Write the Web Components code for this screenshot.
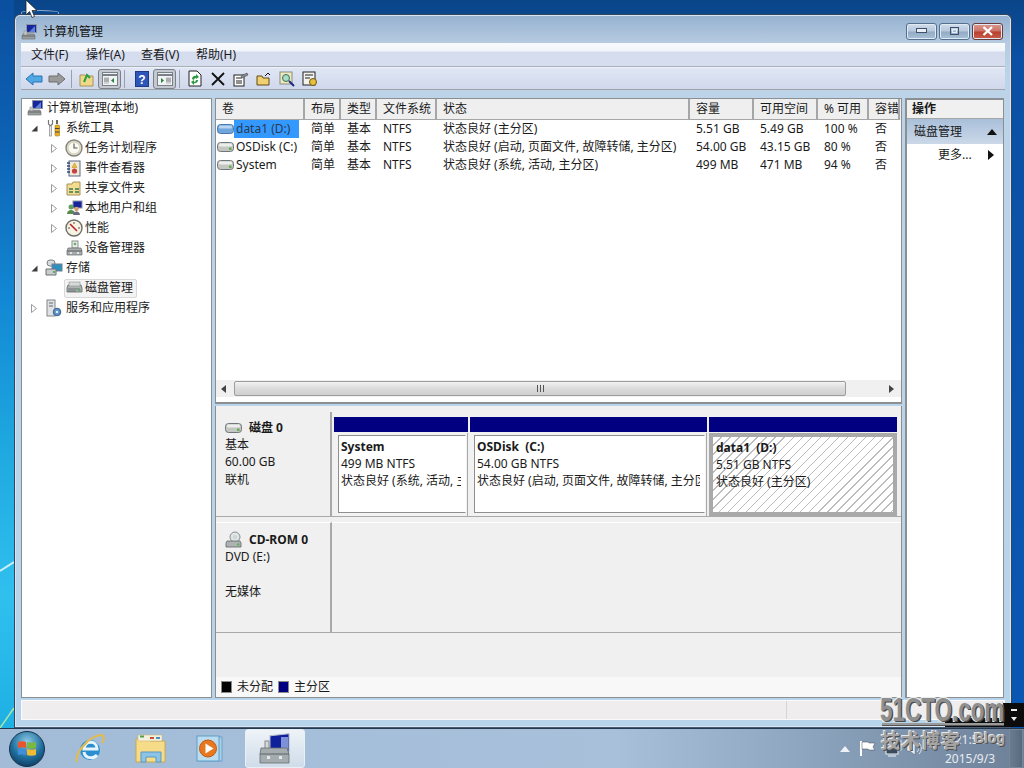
<!DOCTYPE html>
<html>
<head>
<meta charset="utf-8">
<title>计算机管理</title>
<style>
  html, body { margin: 0; height: 100%; overflow: hidden; }
  body { font: 12px/16px "Noto Sans", "Noto Sans CJK SC", sans-serif; color: #1a1a1a; }
</style>
</head>
<body>
<win-desktop>
  <mmc-window>
    <mmc-tree slot="tree"></mmc-tree>
    <volume-table slot="table"></volume-table>
    <disk-view slot="disks"></disk-view>
    <action-pane slot="actions"></action-pane>
  </mmc-window>
  <win-taskbar slot="taskbar"></win-taskbar>
  <bm-watermark slot="watermark"></bm-watermark>
</win-desktop>

<script>
const icons = {
  computer: `<svg width="17" height="16" viewBox="0 0 17 16"><rect x="5.500" y=".5" width="10" height="8" fill="#16269a" stroke="#8a93a8"/><path d="M8 8l6-6v6z" fill="#5f7fd6"/><path d="M2 10h11l1 2v3H1v-3z" fill="#9a9f9f" stroke="#6a6f70" stroke-width=".6"/><rect x="3" y="7" width="3" height="4" fill="#c8c8c0" stroke="#888" stroke-width=".5"/><path d="M1 12h13" stroke="#62686a"/></svg>`,
  tools: `<svg width="16" height="18" viewBox="0 0 16 18"><path d="M2.500 1v4l2 2 2-2V1" fill="none" stroke="#777" stroke-width="1.200"/><rect x="3.500" y="7" width="2" height="10" fill="#e4e4e4" stroke="#8a8a8a" stroke-width=".7"/><path d="M11 1v4" stroke="#666" stroke-width="2"/><rect x="9" y="6" width="4.500" height="11" rx="1" fill="#e8b020" stroke="#a87a10" stroke-width=".6"/><path d="M9 9.500h4.500M9 13h4.500" stroke="#444"/></svg>`,
  clock: `<svg width="18" height="18" viewBox="0 0 18 18"><circle cx="9" cy="9" r="8" fill="#e0dccb" stroke="#85857a" stroke-width="1.400"/><circle cx="9" cy="9" r="5.800" fill="#fbfaf2" stroke="#c8c4b0" stroke-width=".6"/><path d="M9 4.500V9h3.500" fill="none" stroke="#555" stroke-width="1.100"/></svg>`,
  events: `<svg width="16" height="17" viewBox="0 0 16 17"><rect x="3" y="1" width="11" height="15" fill="#f0ead8" stroke="#5a6a8a"/><path d="M1 3h3M1 6h3M1 9h3M1 12h3" stroke="#354a7a" stroke-width="1.400"/><path d="M8.500 3l2.500 4.500H6z" fill="#f0c030" stroke="#a07a10" stroke-width=".4"/><circle cx="8.500" cy="11" r="2.600" fill="#c84040"/></svg>`,
  share: `<svg width="16" height="16" viewBox="0 0 16 16"><path d="M1 4h5l1-2h7v13H1z" fill="#f2dc90" stroke="#a8905a"/><path d="M3 9h4M3 12h4M9 9h4M9 12h4" stroke="#3a7a50" stroke-width="1.600"/></svg>`,
  users: `<svg width="17" height="16" viewBox="0 0 17 16"><rect x="7" y="1" width="9" height="7" fill="#16269a" stroke="#8a93a8"/><circle cx="5" cy="7" r="2.500" fill="#5fa05a"/><path d="M1 14c0-3 2-4 4-4s4 1 4 4z" fill="#5a8a50"/><circle cx="10.500" cy="9" r="2.300" fill="#d8a070"/><path d="M7 15c0-2.500 2-3.500 3.500-3.500S14 12.500 14 15z" fill="#6a6a80"/></svg>`,
  perf: `<svg width="18" height="18" viewBox="0 0 18 18"><circle cx="9" cy="9" r="8" fill="#f6f2e4" stroke="#6e6e66" stroke-width="1.400"/><path d="M5 5l7 7" stroke="#c02020" stroke-width="1.600"/><path d="M9 3v2M3 9h2M13 9h2" stroke="#555"/></svg>`,
  device: `<svg width="17" height="16" viewBox="0 0 17 16"><rect x="6" y="1" width="6" height="7" fill="#e8ece8" stroke="#8a8f90"/><circle cx="9" cy="4" r="1.300" fill="#60b060"/><path d="M2 8h13l1 3v4H1v-4z" fill="#a8acac" stroke="#666a6c" stroke-width=".7"/><path d="M1 11h15" stroke="#5e6264"/><rect x="4" y="12" width="2" height="2" fill="#e4e4e0"/><rect x="11" y="12" width="2" height="2" fill="#e4e4e0"/></svg>`,
  storage: `<svg width="18" height="18" viewBox="0 0 18 18"><rect x="2" y="1" width="8" height="6" rx="3" fill="#d8dcdc" stroke="#7a8084"/><rect x="7" y="5" width="10" height="7" fill="#2f8fc0" stroke="#70808a"/><path d="M1 10h10v6H1z" fill="#c8cccc" stroke="#6a7074"/><rect x="8" y="12" width="2" height="2" fill="#60b060"/></svg>`,
  disk: `<svg width="17" height="16" viewBox="0 0 17 16"><path d="M2 5h13l1 3v4H1V8z" fill="#b0b4b4" stroke="#60666a" stroke-width=".8"/><rect x="3" y="2" width="11" height="4" fill="#d8dad8" stroke="#8a8f90" stroke-width=".6"/><path d="M2 9h12M2 11h8" stroke="#6a7074"/><rect x="12" y="9" width="2.500" height="2" fill="#60b060"/></svg>`,
  services: `<svg width="16" height="18" viewBox="0 0 16 18"><rect x="1" y="1" width="8" height="16" fill="#dfe2e4" stroke="#80868a"/><path d="M3 4h4M3 7h4" stroke="#666"/><circle cx="11" cy="13" r="3.800" fill="#5a8ec8" stroke="#40648c"/><circle cx="11" cy="13" r="1.300" fill="#e4eef8"/></svg>`,
  volume: `<svg width="17" height="10" viewBox="0 0 17 10"><rect x=".5" y=".5" width="16" height="9" rx="3" fill="#c4c6c2" stroke="#71767a"/><rect x="2" y="1.500" width="13" height="3" rx="1" fill="#eceeec"/><rect x="12" y="5.500" width="2.500" height="2.500" fill="#66ac55"/></svg>`,
  volumeSel: `<svg width="17" height="10" viewBox="0 0 17 10"><rect x=".5" y=".5" width="16" height="9" rx="3" fill="#6fa6dc" stroke="#4a78ac"/><rect x="2" y="1.500" width="13" height="3" rx="1" fill="#b8d4f0"/></svg>`,
  optical: `<svg width="17" height="17" viewBox="0 0 17 17"><circle cx="10" cy="6" r="5" fill="#dfe4e4" stroke="#8a9094"/><circle cx="10" cy="6" r="1.200" fill="#fff" stroke="#8a9094" stroke-width=".5"/><path d="M2 10h13l1 2v4H1v-4z" fill="#aeb2b2" stroke="#5e6468" stroke-width=".8"/><rect x="12" y="12.500" width="2.500" height="2" fill="#60b060"/></svg>`
};

class WinDesktop extends HTMLElement {
  constructor() {
    super();
    const shadowRoot = this.attachShadow({mode: 'open'});
    shadowRoot.innerHTML = `<style>
      :host { display: block; position: relative; width: 1024px; height: 768px; overflow: hidden;
        background: linear-gradient(180deg, #0a4588 0, #0b50a4 60px, #0a58b4 100%); }
      .left { position: absolute; left: 0; top: 0; }
      ::slotted(mmc-window) { position: absolute; left: 14px; top: 14px; }
      ::slotted(win-taskbar) { position: absolute; left: 0; top: 728px; }
      ::slotted(bm-watermark) { position: absolute; left: 880px; top: 696px; }
      .arc { position: absolute; left: 21px; top: 10px; width: 36px; height: 4px; border: 1px solid #8fa8c8; border-bottom: 0; border-radius: 50% 50% 0 0; }
      svg.cursor { position: absolute; left: 25px; top: 0; }
    </style>
    <svg class="left" width="14" height="728" viewBox="0 0 14 728">
      <defs><linearGradient id="l" x1="0" y1="0" x2="0" y2="1"><stop offset="0" stop-color="#0b4f9f"/><stop offset=".2" stop-color="#0d62b4"/><stop offset=".41" stop-color="#1288d4"/><stop offset=".62" stop-color="#1fa9e0"/><stop offset=".82" stop-color="#30c0ee"/><stop offset="1" stop-color="#1fb0e4"/></linearGradient></defs>
      <rect width="14" height="728" fill="url(#l)"/>
      <path d="M0 571L14 562" stroke="#c8f0fa" stroke-width="2"/>
      <path d="M0 728L14 708" stroke="#a8e8a8" stroke-width="1.500"/>
    </svg>
    <div class="arc"></div>
    <slot></slot><slot name="taskbar"></slot><slot name="watermark"></slot>
    <svg class="cursor" width="13" height="19" viewBox="0 0 13 19"><path d="M1 0v15l3.500-3.500 2.500 6 2.500-1-2.500-6H12z" fill="#fff" stroke="#222" stroke-width=".8"/></svg>`;
  }
}

class MmcWindow extends HTMLElement {
  constructor() {
    super();
    const shadowRoot = this.attachShadow({mode: 'open'});
    shadowRoot.innerHTML = `<style>
      :host { display: flex; flex-direction: column; box-sizing: border-box; width: 998px; height: 714px;
        padding: 0 6px 7px; border: 1px solid #33465e; border-bottom-color: #4a5a70; border-radius: 6px 6px 0 0;
        background: linear-gradient(180deg, #95b1d0 0, #b6cbe0 28px, #bcd3e8 60px, #b8d4ea 100%);
        box-shadow: inset 0 0 0 1px #d8e6f2; }
      .title { height: 28px; flex: none; display: flex; align-items: center; gap: 5px; box-sizing: border-box; padding: 5px 0 0 0; font-size: 12px; color: #111; }
      .title svg { flex: none; }
      .caption { margin-left: auto; margin-right: 2px; margin-top: -1px; display: flex; gap: 2px; }
      .caption span { width: 31px; height: 17px; box-sizing: border-box; border: 1px solid #55708f; border-radius: 3px; display: flex; align-items: center; justify-content: center;
        background: linear-gradient(180deg, #cfdcea 0, #b6c8dc 48%, #93aac4 52%, #a9c0d8 100%); box-shadow: inset 0 0 0 1px #e0eaf4; }
      .caption span.close { background: linear-gradient(180deg, #dc9a90 0, #cc7166 48%, #b83f2e 52%, #c8604c 100%); border-color: #6b3a3a; }
      .menu { height: 24px; flex: none; display: flex; align-items: center; gap: 16px; padding-left: 10px; box-sizing: border-box; background: linear-gradient(180deg, #f8fafc 0, #f2f5fa 8px, #d4dcee 9px, #d6deee 100%); border-bottom: 1px solid #a8b0bc; }
      .menu span { width: 39px; white-space: nowrap; }
      .tools { height: 23px; box-sizing: border-box; flex: none; display: flex; align-items: center; padding-left: 1px; background: linear-gradient(180deg, #e0e6f4, #d0d8ec); border-bottom: 1px solid #a0a4a8; border-top: 1px solid #eef2f8; }
      .t { width: 23px; height: 20px; display: flex; align-items: center; justify-content: center; flex: none; box-sizing: border-box; }
      .t.on { border: 1px solid #7c8088; border-radius: 3px; background: #c4c8d0; }
      .sep { width: 1px; height: 18px; background: #9aa0aa; margin: 0 3px; flex: none; }
      .sep.wide { margin-right: 5px; }
      .body { flex: 1; min-height: 0; display: flex; gap: 3px; padding: 8px 1px 0 0; }
      .tree { width: 191px; flex: none; box-sizing: border-box; background: #fff; border: 1px solid #8c8f92; }
      .center { width: 687px; flex: none; display: flex; flex-direction: column; gap: 2px; }
      .actions { flex: 1; box-sizing: border-box; background: #fff; border: 1px solid #8c8f92; border-width: 2px 1px 1px 2px; }
      .status { height: 20px; flex: none; margin-top: 2px; background: #efeded; box-sizing: border-box; border: 1px solid #fafafa; display: grid; grid-template-columns: 1fr 216px 2px; }
      .status i { display: block; border-left: 1px solid #d8d4d4; }
    </style>
    <div class="title">${icons.computer}<span>计算机管理</span>
      <div class="caption">
        <span><svg width="12" height="6"><rect x=".5" y=".5" width="10" height="4" fill="#e8eef4" stroke="#40506a"/></svg></span>
        <span><svg width="12" height="10"><rect x="1.500" y="1.500" width="8" height="7" fill="none" stroke="#40506a"/><rect x="3.500" y="3.500" width="4" height="3" fill="none" stroke="#e8eef4"/></svg></span>
        <span class="close"><svg width="12" height="10"><path d="M1.500 1L10 9M10 1L1.500 9" stroke="#fff" stroke-width="2.400"/></svg></span>
      </div>
    </div>
    <div class="menu"><span>文件(F)</span><span>操作(A)</span><span>查看(V)</span><span>帮助(H)</span></div>
    <div class="tools">
      <div class="t"><svg width="18" height="14"><path d="M1 7l7-6v3h9v6H8v3z" fill="#4fa8e4" stroke="#2a74b4"/></svg></div>
      <div class="t"><svg width="18" height="14"><path d="M17 7l-7-6v3H1v6h9v3z" fill="#9a9a9a" stroke="#6e6e6e"/></svg></div>
      <div class="sep"></div>
      <div class="t"><svg width="16" height="16"><path d="M1 4h5l1 1h7v10H1z" fill="#f0d88a" stroke="#a89058"/><path d="M5 11l3-7 3 3" fill="none" stroke="#2aa040" stroke-width="2"/></svg></div>
      <div class="t on"><svg width="16" height="14"><rect x=".5" y=".5" width="15" height="13" fill="#f0f2f4" stroke="#7a8088"/><path d="M1 3h14" stroke="#7a8088" stroke-width="2"/><path d="M2 5h5v7H2z" fill="#d0d4d8"/><path d="M2 7h5M2 9h5" stroke="#888"/><path d="M12 6v5l-3-2.500z" fill="#2a8040"/></svg></div>
      <div class="sep wide"></div>
      <div class="t"><svg width="14" height="16"><rect x=".5" y=".5" width="13" height="15" fill="#2e56b8" stroke="#1c3a88"/><text x="7" y="12.500" font-size="12" font-weight="700" fill="#fff" text-anchor="middle" font-family="Liberation Sans">?</text></svg></div>
      <div class="t on"><svg width="16" height="14"><rect x=".5" y=".5" width="15" height="13" fill="#f0f2f4" stroke="#7a8088"/><path d="M1 3h14" stroke="#7a8088" stroke-width="2"/><path d="M9 5h5v7H9z" fill="#d0d4d8"/><path d="M9 7h5M9 9h5" stroke="#888"/><path d="M4 6v5l3-2.500z" fill="#2a8040"/></svg></div>
      <div class="sep"></div>
      <div class="t"><svg width="14" height="17"><path d="M1 1h8l4 4v11H1z" fill="#fff" stroke="#222"/><path d="M4 9a3 3 0 0 1 4-3V4l3 3-3 2V8a2 2 0 0 0-2 2zM10 10a3 3 0 0 1-4 3v2l-3-3 3-2v2a2 2 0 0 0 2-2z" fill="#2a9a40"/></svg></div>
      <div class="t"><svg width="14" height="14"><path d="M1 1l12 12M13 1L1 13" stroke="#111" stroke-width="1.800"/></svg></div>
      <div class="t"><svg width="16" height="16"><rect x="1" y="4" width="10" height="11" fill="#fff" stroke="#222"/><path d="M3 7h6M3 10h6M3 12h6" stroke="#222"/><path d="M8 5l6-3 1 2-6 3z" fill="#8a8f98" stroke="#333" stroke-width=".5"/></svg></div>
      <div class="t"><svg width="16" height="14"><path d="M1 4h5l1 2h6v7H1z" fill="#f0d070" stroke="#5e4a14"/><path d="M9 4l3-3 2 2" fill="none" stroke="#111"/></svg></div>
      <div class="t"><svg width="16" height="16"><rect x="1" y="1" width="12" height="12" fill="#f0ecb8" stroke="#888"/><circle cx="7" cy="7" r="3.500" fill="#a8dcc8" stroke="#3a6a5a"/><path d="M10 10l5 5" stroke="#1c2a80" stroke-width="2"/></svg></div>
      <div class="t"><svg width="16" height="16"><rect x="1" y="1" width="12" height="13" fill="#f2f2ee" stroke="#222"/><path d="M3 4h8M3 7h5" stroke="#222"/><circle cx="11" cy="11" r="3.500" fill="#e8c040" stroke="#6a5a10"/></svg></div>
    </div>
    <div class="body">
      <div class="tree"><slot name="tree"></slot></div>
      <div class="center"><slot name="table"></slot><slot name="disks"></slot></div>
      <div class="actions"><slot name="actions"></slot></div>
    </div>
    <div class="status"><span></span><i></i><i></i></div>`;
  }
}

class TreeRow extends HTMLElement {
  constructor() {
    super();
    const level = Number(this.getAttribute('level') || 0);
    const arrow = this.getAttribute('arrow');
    const glyph = arrow === 'open'
      ? `<svg width="9" height="9"><path d="M7.500 1.500v6h-6z" fill="#3c3c3c"/></svg>`
      : arrow === 'closed' ? `<svg width="9" height="11"><path d="M1.500 1.500l5 4-5 4z" fill="#fff" stroke="#9a9a9a"/></svg>` : '';
    const shadowRoot = this.attachShadow({mode: 'open'});
    shadowRoot.innerHTML = `<style>
      :host { display: flex; align-items: center; height: 20px; padding-left: ${level === 0 ? 3 : 8 + (level - 1) * 20}px; white-space: nowrap; }
      .arrow { width: 14px; flex: none; display: flex; align-items: center; justify-content: flex-start; }
      .icon { width: 18px; height: 18px; flex: none; display: flex; align-items: center; justify-content: center; }
      .label { margin-left: ${level === 2 ? 0 : 1}px; padding: 0 3px 0 2px; line-height: 18px; }
      .wrap { display: flex; align-items: center; height: 19px; box-sizing: border-box; border: 1px solid transparent; }
      :host([selected]) .wrap { background: #f3f3f3; border-color: #d8d8d8; border-radius: 2px; }
    </style>
    ${level === 0 ? '' : `<span class="arrow">${glyph}</span>`}
    <span class="wrap"><span class="icon">${icons[this.getAttribute('icon')]}</span><span class="label"><slot></slot></span></span>`;
  }
}

class MmcTree extends HTMLElement {
  constructor() {
    super();
    const shadowRoot = this.attachShadow({mode: 'open'});
    shadowRoot.innerHTML = `<style>:host { display: block; margin-top: -1px; }</style>
      <tree-row level="0" icon="computer">计算机管理(本地)</tree-row>
      <tree-row level="1" arrow="open" icon="tools">系统工具</tree-row>
      <tree-row level="2" arrow="closed" icon="clock">任务计划程序</tree-row>
      <tree-row level="2" arrow="closed" icon="events">事件查看器</tree-row>
      <tree-row level="2" arrow="closed" icon="share">共享文件夹</tree-row>
      <tree-row level="2" arrow="closed" icon="users">本地用户和组</tree-row>
      <tree-row level="2" arrow="closed" icon="perf">性能</tree-row>
      <tree-row level="2" icon="device">设备管理器</tree-row>
      <tree-row level="1" arrow="open" icon="storage">存储</tree-row>
      <tree-row level="2" icon="disk" selected>磁盘管理</tree-row>
      <tree-row level="1" arrow="closed" icon="services">服务和应用程序</tree-row>`;
  }
}

class VolumeTable extends HTMLElement {
  constructor() {
    super();
    const cols = '89px 36px 36px 60px 253px 64px 64px 51px 31px';
    const head = ['卷', '布局', '类型', '文件系统', '状态', '容量', '可用空间', '% 可用', '容错'];
    const rows = [
      ['data1 (D:)', '简单', '基本', 'NTFS', '状态良好 (主分区)', '5.51 GB', '5.49 GB', '100 %', '否'],
      ['OSDisk (C:)', '简单', '基本', 'NTFS', '状态良好 (启动, 页面文件, 故障转储, 主分区)', '54.00 GB', '43.15 GB', '80 %', '否'],
      ['System', '简单', '基本', 'NTFS', '状态良好 (系统, 活动, 主分区)', '499 MB', '471 MB', '94 %', '否']
    ];
    const body = rows.map((r, i) => `<div class="row">${r.map((c, j) => j === 0
      ? `<span class="first">${i === 0 ? icons.volumeSel : icons.volume}<b class="${i === 0 ? 'sel' : ''}">${c}</b></span>`
      : `<span>${c}</span>`).join('')}</div>`).join('');
    const shadowRoot = this.attachShadow({mode: 'open'});
    shadowRoot.innerHTML = `<style>
      :host { display: flex; flex-direction: column; height: 306px; flex: none; box-sizing: border-box; background: #fff; border: 1px solid #8c8f92; border-bottom: 2px solid #8c8f92; overflow: hidden; }
      .head, .row { display: grid; grid-template-columns: ${cols}; white-space: nowrap; }
      .head { height: 21px; background: #efefef; flex: none; }
      .head span { padding-left: 6px; line-height: 20px; border-right: 2px solid #a6a6a6; border-bottom: 1px solid #a6a6a6; overflow: hidden; box-sizing: border-box; }
      .rows { flex: 1; min-height: 0; }
      .row { height: 18px; line-height: 18px; }
      .row span { padding-left: 6px; overflow: hidden; }
      .row span.first { padding-left: 1px; display: flex; align-items: center; overflow: visible; }
      .first svg { flex: none; }
      .first b { font-weight: 400; margin-left: 2px; }
      .first b.sel { background: #3399ff; color: #2a3a50; margin-left: 0; padding-left: 2px; width: 65px; box-sizing: border-box; }
      .scroll { height: 17px; flex: none; margin-bottom: 5px; display: flex; align-items: center; background: #f0f0f0; padding: 0 2px 0 5px; box-sizing: border-box; }
      .scroll .thumb { flex: none; width: 612px; margin-left: 7px; height: 15px; box-sizing: border-box; border: 1px solid #9a9ea0; border-radius: 2px; background: linear-gradient(180deg,#f2f2f2,#dcdcdc 50%,#cfcfcf); display: flex; align-items: center; justify-content: center; }
      .scroll .grow { flex: 1; display: flex; justify-content: flex-end; padding-right: 4px; }
    </style>
    <div class="head">${head.map((h) => `<span>${h}</span>`).join('')}</div>
    <div class="rows">${body}</div>
    <div class="scroll">
      <svg width="6" height="8"><path d="M5 0v8L0 4z" fill="#444"/></svg>
      <div class="thumb"><svg width="7" height="7"><path d="M.5 0v7M3.500 0v7M6.500 0v7" stroke="#555"/></svg></div>
      <div class="grow"><svg width="6" height="8"><path d="M0 0v8l5-4z" fill="#444"/></svg></div>
    </div>`;
  }
}

class DiskPartition extends HTMLElement {
  constructor() {
    super();
    const shadowRoot = this.attachShadow({mode: 'open'});
    shadowRoot.innerHTML = `<style>
      :host { display: flex; flex-direction: column; box-sizing: border-box; min-width: 0; }
      .bar { height: 15px; background: #000080; flex: none; }
      .frame { flex: 1; margin-top: 1px; padding: 2px 1px 3px 4px; background: #f2f2f2; border-right: 1px solid #a9a9a9; min-height: 0; display: flex; }
      :host([selected]) .frame { padding: 4px; background: #a9a9a9; border: 0; }
      .in { flex: 1; min-width: 0; background: #fff; border: 1px solid #8e8e8e; border-right-color: #fff; padding: 2px 0 0 2px; line-height: 17px; }
      .txt { white-space: nowrap; overflow: hidden; margin-right: 4px; }
      :host([selected]) .in { border: 0; padding: 2px 0 0 3px; background:
        repeating-linear-gradient(135deg, #fff 0, #fff 5.400px, #bcbcbc 5.400px, #bcbcbc 6.400px); }
      b { display: block; font-weight: 700; }
      span { display: block; }
    </style>
    <div class="bar"></div>
    <div class="frame"><div class="in"><div class="txt"><b>${this.getAttribute('name')}</b><span>${this.getAttribute('size')}</span><span>${this.getAttribute('state')}</span></div></div></div>`;
  }
}

class DiskView extends HTMLElement {
  constructor() {
    super();
    const shadowRoot = this.attachShadow({mode: 'open'});
    shadowRoot.innerHTML = `<style>
      :host { display: flex; flex-direction: column; flex: 1; min-height: 0; box-sizing: border-box; background: #f0f0f0; border: 1px solid #8c8f92; border-top: 0; padding-top: 6px; }
      .row { display: flex; flex: none; }
      .info { width: 116px; flex: none; box-sizing: border-box; padding: 7px 0 0 9px; border-right: 2px solid #a9a9a9; border-bottom: 1px solid #a9a9a9; line-height: 17.330px; }
      .info .name { display: flex; align-items: center; gap: 7px; font-weight: 700; height: 17px; }
      .d0, .d0 .info { height: 105px; }
      .parts { flex: 1; display: grid; grid-template-columns: 134px 237px 188px; column-gap: 2px; padding: 5px 0 0 2px; box-sizing: border-box; border-bottom: 1px solid #a9a9a9; }
      .d1, .d1 .info { height: 111px; }
      .d1 { margin-top: 5px; }
      .d1 .info { padding-top: 8px; border-top: 1px solid #fff; }
      .d1 .empty { flex: 1; border-top: 1px solid #fff; border-bottom: 1px solid #a9a9a9; }
      .legend { margin-top: auto; display: flex; align-items: center; height: 20px; padding-left: 5px; background: #f8f8f8; flex: none; }
      .sw { width: 11px; height: 12px; margin-right: 5px; flex: none; box-sizing: border-box; border: 1px solid #8a8a8a; }
      .lbl { margin-right: 5px; }
    </style>
    <div class="row d0">
      <div class="info"><div class="name">${icons.volume}<span>磁盘 0</span></div><div>基本</div><div>60.00 GB</div><div>联机</div></div>
      <div class="parts">
        <disk-partition name="System" size="499 MB NTFS" state="状态良好 (系统, 活动, 主分区)"></disk-partition>
        <disk-partition name="OSDisk&nbsp; (C:)" size="54.00 GB NTFS" state="状态良好 (启动, 页面文件, 故障转储, 主分区)"></disk-partition>
        <disk-partition selected name="data1&nbsp; (D:)" size="5.51 GB NTFS" state="状态良好 (主分区)"></disk-partition>
      </div>
    </div>
    <div class="row d1">
      <div class="info"><div class="name">${icons.optical}<span>CD-ROM 0</span></div><div>DVD (E:)</div><div>&nbsp;</div><div>无媒体</div></div>
      <div class="empty"></div>
    </div>
    <div class="legend"><span class="sw" style="background:#000"></span><span class="lbl">未分配</span><span class="sw" style="background:#000080"></span><span class="lbl">主分区</span></div>`;
  }
}

class ActionPane extends HTMLElement {
  constructor() {
    super();
    const shadowRoot = this.attachShadow({mode: 'open'});
    shadowRoot.innerHTML = `<style>
      :host { display: block; }
      .head { height: 18px; line-height: 18px; padding-left: 5px; font-weight: 700; background: #f0f0f0; border-bottom: 1px solid #a6a6a6; }
      .group { height: 25px; display: flex; align-items: center; justify-content: space-between; padding: 0 6px 0 7px; background: linear-gradient(180deg, #a9c0da, #cbd8e8); }
      .more { height: 22px; display: flex; align-items: center; justify-content: space-between; padding: 0 9px 0 31px; }
    </style>
    <div class="head">操作</div>
    <div class="group"><span>磁盘管理</span><svg width="10" height="6"><path d="M0 6h10L5 0z" fill="#111"/></svg></div>
    <div class="more"><span>更多...</span><svg width="6" height="10"><path d="M0 0v10l6-5z" fill="#111"/></svg></div>`;
  }
}

class Watermark extends HTMLElement {
  constructor() {
    super();
    const shadowRoot = this.attachShadow({mode: 'open'});
    shadowRoot.innerHTML = `<style>
      :host { display: block; width: 144px; height: 58px; color: #8f8f8f; pointer-events: none; font-family: "Liberation Sans", sans-serif; font-weight: 700; }
      .black { position: absolute; left: 65px; top: 22px; width: 79px; height: 9px; background: #0c0c0c; }
      .black.tall { left: 123px; top: 7px; width: 21px; height: 24px; display: flex; flex-direction: column; align-items: center; gap: 6px; padding-top: 6px; box-sizing: border-box; }
      .tall i { display: block; width: 6px; height: 2px; background: #eee; }
      .tall u { display: block; width: 0; height: 0; border: 3px solid transparent; border-top: 4px solid #eee; border-bottom: 0; }
      .a, .line, .b { position: relative; }
      .a { font-size: 33px; line-height: 27px; white-space: nowrap; transform: scaleX(.68); transform-origin: 0 0;
        text-shadow: 2px 1px 0 #4a4a4a, -1px -1px 0 #ececec, 1px -1px 0 #ececec, -1px 1px 0 #ececec; }
      .line { height: 2px; background: #9a9a9a; width: 122px; margin-left: 2px; box-shadow: 0 1px 0 #555; }
      .b { display: flex; justify-content: space-between; width: 124px; margin: 4px 0 0 1px; }
      .b span { font: 700 19px/22px "Noto Sans CJK SC", sans-serif; letter-spacing: 1px; white-space: nowrap; color: #a4a4a4; text-shadow: 1px 1px 0 #505050, -1px -1px 0 #e8e8e8; }
      .b small { font-size: 14px; line-height: 14px; margin-top: 2px; color: #a8a8a8; text-shadow: 1px 1px 0 #505050, -1px -1px 0 #e8e8e8; }
    </style>
    <div class="black"></div><div class="black tall"><i></i><u></u></div>
    <div class="a">51CTO.com</div><div class="line"></div>
    <div class="b"><span>技术博客</span><small>Blog</small></div>`;
  }
}

class WinTaskbar extends HTMLElement {
  constructor() {
    super();
    const shadowRoot = this.attachShadow({mode: 'open'});
    shadowRoot.innerHTML = `<style>
      :host { display: flex; align-items: stretch; box-sizing: border-box; width: 1024px; height: 40px; border-top: 1px solid #24384f; color: #fff;
        background: linear-gradient(90deg, #a2bcd8 0, #a8c0da 60%, #8ea6c0 78%, #6d8098 100%); }
      .orb { width: 54px; flex: none; display: flex; align-items: center; justify-content: center; }
      .app { flex: none; display: flex; align-items: center; justify-content: center; }
      .app.active { height: 39px; width: 60px; box-sizing: border-box; border: 1px solid #e8f0f6; border-radius: 3px; background: linear-gradient(180deg, #eef3f8, #cfdce9); }
      .tray { margin-left: auto; display: flex; align-items: center; }
      .clock { width: 62px; text-align: center; font-size: 12px; line-height: 19px; color: #e8ecf0; white-space: nowrap; margin: 0 8px 0 16px; }
      .show { width: 14px; height: 39px; box-sizing: border-box; border: 1px solid #75889a; background: linear-gradient(90deg,#6a7c90,#586a7e); margin-right: 1px; }
    </style>
    <div class="orb"><svg width="38" height="36" viewBox="0 0 38 36"><defs><radialGradient id="o" cx=".5" cy=".3" r=".8"><stop offset="0" stop-color="#8ecbe6"/><stop offset=".55" stop-color="#1f6f9e"/><stop offset="1" stop-color="#0c2d4f"/></radialGradient></defs><circle cx="19" cy="18" r="17.500" fill="url(#o)" stroke="#18324a"/><path d="M10 11c3-1 5-1 8 0v6c-3-1-5-1-8 0z" fill="#e8552e"/><path d="M19 11c3 1 6 1 9 0v6c-3 1-6 1-9 0z" fill="#7db83e"/><path d="M10 18c3-1 5-1 8 0v6c-3-1-5-1-8 0z" fill="#3f8fd8"/><path d="M19 18c3 1 6 1 9 0v6c-3 1-6 1-9 0z" fill="#f0bb30"/></svg></div>
    <div class="app" style="width:72px"><svg width="32" height="32" viewBox="0 0 32 32"><circle cx="16" cy="17" r="10" fill="#2a8fd0"/><path d="M10 16h13c0-9-12-9-13 0zM10 19c1 7 10 7 13 3" fill="none" stroke="#e8f4fc" stroke-width="3"/><path d="M3 29C0 22 14 3 27 2c4 0 3 5 1 8" fill="none" stroke="#e0bc50" stroke-width="2.200"/></svg></div>
    <div class="app" style="width:50px"><svg width="34" height="30" viewBox="0 0 34 30"><path d="M2 5h12l2 2h15v21H2z" fill="#f6dc88" stroke="#c8a850"/><rect x="4" y="1" width="24" height="6" fill="#f4f0dc" stroke="#c8b880" stroke-width=".6"/><rect x="6" y="1.500" width="4" height="2" fill="#50a050"/><rect x="16" y="3" width="4" height="2" fill="#c85030"/><rect x="22" y="3" width="4" height="2" fill="#4a90c0"/><path d="M7 28V18h20v10h-5v-5H12v5z" fill="#8cc4e8" stroke="#5a98c4"/></svg></div>
    <div class="app" style="width:69px"><svg width="30" height="30" viewBox="0 0 30 30"><rect x="4" y="3" width="22" height="24" fill="#a8d0e8" stroke="#6ea4c8"/><rect x="1" y="2" width="22" height="25" fill="#bcdcf0" stroke="#5e9cc8"/><circle cx="12" cy="14.500" r="8.500" fill="#e87820" stroke="#c05a10"/><path d="M9.500 9.500v10l8-5z" fill="#fff"/></svg></div>
    <div class="app active"><svg width="34" height="32" viewBox="0 0 34 32"><rect x="12" y="2" width="19" height="18" fill="#10209a" stroke="#b4bcc8" transform="skewY(-6) translate(0,2)"/><path d="M23 4h7v13h-7z" fill="#7e90d8"/><rect x="7" y="8" width="4" height="9" fill="#d4d8d8" stroke="#888"/><path d="M3 15h26l2 6v9H2v-9z" fill="#a4acb0" stroke="#666c70" stroke-width=".8"/><path d="M2 21h29" stroke="#5c6468"/><rect x="9" y="23" width="3" height="3" fill="#e4e8e8"/><rect x="21" y="23" width="3" height="3" fill="#e4e8e8"/></svg></div>
    <div class="tray">
      <svg width="10" height="6" style="margin-right:10px"><path d="M0 6h10L5 0z" fill="#eef2f6"/></svg>
      <svg width="16" height="17" viewBox="0 0 16 17" style="margin-right:9px"><path d="M1 1v15" stroke="#fff" stroke-width="2"/><path d="M2 2h6l1 1h6l-2 4 2 3H9L8 9H2z" fill="#fff" stroke="#3a4a5a" stroke-width=".5"/></svg>
      <svg width="18" height="17" viewBox="0 0 18 17" style="margin-right:3px"><rect x="4" y="1" width="12" height="9" fill="#3a4a5c" stroke="#eef2f6"/><rect x="1" y="5" width="12" height="9" fill="#3a4a5c" stroke="#eef2f6"/><path d="M3 16h8" stroke="#eef2f6"/></svg>
      <svg width="17" height="17" viewBox="0 0 17 17"><path d="M1 6h3l5-4v13l-5-4H1z" fill="#eef2f6" stroke="#55677a" stroke-width=".5"/><path d="M11 5c2 2 2 5 0 7M13 3c3 3 3 8 0 11" fill="none" stroke="#dfe6ec"/></svg>
      <div class="clock">21:53<br>2015/9/3</div>
      <div class="show"></div>
    </div>`;
  }
}

window.customElements.define('tree-row', TreeRow);
window.customElements.define('mmc-tree', MmcTree);
window.customElements.define('volume-table', VolumeTable);
window.customElements.define('disk-partition', DiskPartition);
window.customElements.define('disk-view', DiskView);
window.customElements.define('action-pane', ActionPane);
window.customElements.define('mmc-window', MmcWindow);
window.customElements.define('bm-watermark', Watermark);
window.customElements.define('win-taskbar', WinTaskbar);
window.customElements.define('win-desktop', WinDesktop);
</script>
</body>
</html>
